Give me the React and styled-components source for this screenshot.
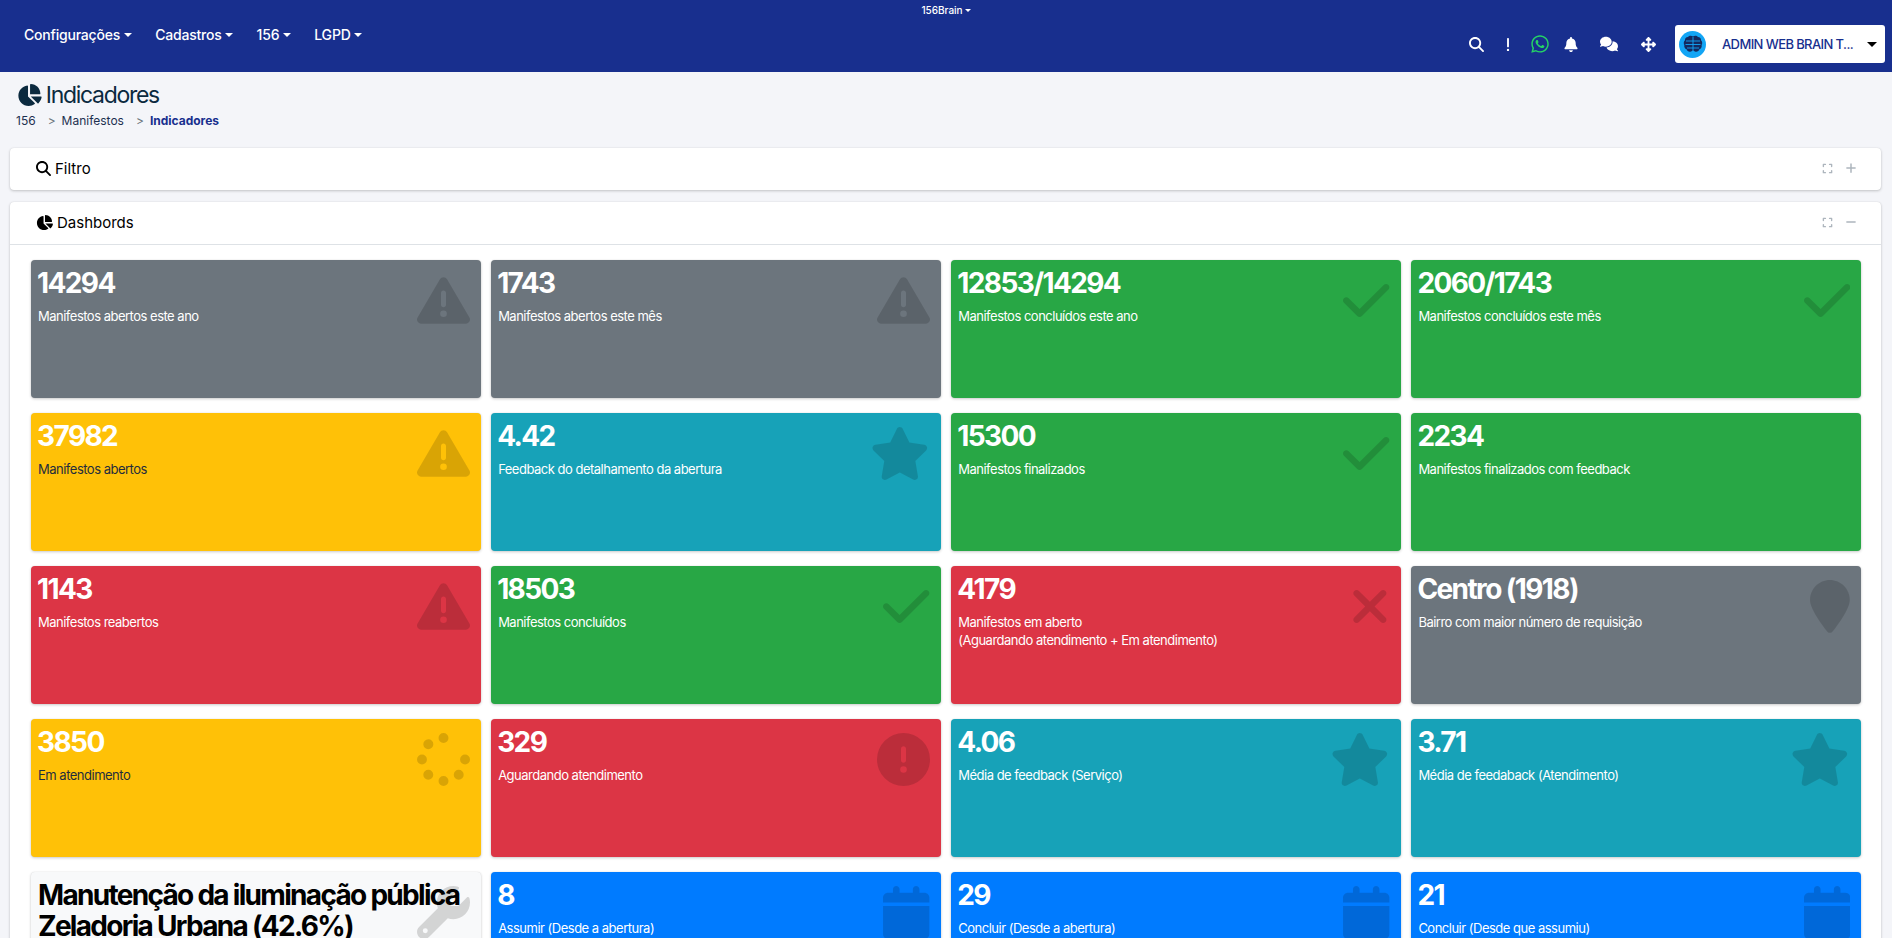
import React from 'react'
import styled, {createGlobalStyle} from 'styled-components'
import {
	FaChartPie, FaMagnifyingGlass, FaExclamation, FaWhatsapp, FaBell, FaComments,
	FaUpDownLeftRight, FaExpand, FaPlus, FaMinus, FaTriangleExclamation,
	FaCheck, FaStar, FaXmark, FaLocationPin, FaSpinner, FaCircleExclamation,
	FaWrench, FaCalendar,
} from 'react-icons/fa6'

const GlobalStyle = createGlobalStyle`
	html, body {
		margin: 0;
		height: 100%;
		overflow: hidden;
		background: #f4f5f9;
		font-family: Inter, "Liberation Sans", sans-serif;
	}
	* { box-sizing: border-box; }
`

const tones = {
	gray: {bg: '#6c757d', text: '#fff'},
	green: {bg: '#28a745', text: '#fff'},
	yellow: {bg: '#ffc107', text: '#1f2d3d'},
	info: {bg: '#17a2b8', text: '#fff'},
	red: {bg: '#dc3545', text: '#fff'},
	blue: {bg: '#007bff', text: '#fff'},
	light: {bg: '#f8f9fa', text: '#000'},
}

const Header = styled.header`
	height: 72px;
	background: #182f8e;
	color: #fff;
	padding: 3px 7px 0 24px;
`
const Brand = styled.div`
	height: 22px;
	margin: 0 -7px 0 -24px;
	font-size: 10px;
	line-height: 14px;
	font-weight: 500;
	text-align: center;
`
const Bar = styled.div`
	display: flex;
	justify-content: space-between;
	align-items: flex-start;
`
const Nav = styled.nav`
	display: flex;
	gap: 23.5px;
`
const NavItem = styled.a`
	font-size: 14px;
	line-height: 20px;
	font-weight: 500;
	letter-spacing: -0.2px;
	color: #fff;
`
const Caret = styled.span`
	display: inline-block;
	margin-left: ${props => props.$small ? 2 : 3.5}px;
	vertical-align: ${props => props.$small ? 2 : 3}px;
	border-top: ${props => props.$small ? 3 : props.$dark ? 5 : 4}px solid ${props => props.$dark ? '#000' : '#fff'};
	border-left: ${props => props.$small ? 3 : props.$dark ? 5 : 4}px solid transparent;
	border-right: ${props => props.$small ? 3 : props.$dark ? 5 : 4}px solid transparent;
`
const Tools = styled.div`
	display: flex;
	align-items: center;
	height: 38px;
`
const Tool = styled.span`
	display: flex;
	justify-content: center;
	width: ${props => props.$w}px;
	margin-right: ${props => props.$gap}px;
	font-size: ${props => props.$size || 15}px;
	color: ${props => props.$color || '#fff'};
`
const Profile = styled.div`
	width: 210px;
	height: 38px;
	background: #fff;
	border-radius: 3px;
	display: flex;
	align-items: center;
	padding: 0 8px 0 4px;
`
const Avatar = styled.span`
	width: 27px;
	height: 27px;
	border-radius: 50%;
	background: #12a5f5;
	display: flex;
	align-items: center;
	justify-content: center;
	flex: none;
`
const ProfileName = styled.span`
	flex: 1;
	margin-left: 16px;
	font-size: 13px;
	font-weight: 500;
	letter-spacing: -0.6px;
	color: #182f8e;
	white-space: nowrap;
`

const Main = styled.main`
	padding: 0 11px 0 10px;
`
const PageHead = styled.div`
	height: 76px;
	padding: 10px 0 0 7px;
`
const Title = styled.h1`
	margin: 0;
	display: flex;
	align-items: center;
	gap: 4px;
	font-size: 23px;
	line-height: 26px;
	font-weight: 400;
	letter-spacing: -1.3px;
	color: #0b2a3f;
	svg { height: 22px; width: 24.75px; }
`
const Crumbs = styled.div`
	display: flex;
	margin: 5px 0 0 -1px;
	font-size: 12px;
	line-height: 16px;
	color: #1d3050;
`
const Sep = styled.span`
	color: #6c757d;
	margin: 0 6px 0 12px;
`
const Current = styled.b`
	color: #182f8e;
	font-weight: 700;
`
const Panel = styled.section`
	background: #fff;
	border-radius: 4px;
	box-shadow: 0 0 1px rgba(0,0,0,.125), 0 1px 3px rgba(0,0,0,.2);
	margin-bottom: 12px;
`
const PanelHead = styled.div`
	height: ${props => props.$line ? 43 : 42}px;
	display: flex;
	align-items: center;
	padding: 0 24px 2px 26px;
	font-size: 15px;
	color: #000;
	border-bottom: ${props => props.$line ? '1px solid #dee2e6' : 'none'};
	svg { flex: none; }
`
const PanelTitle = styled.span`
	flex: 1;
	margin-left: 4px;
`
const PanelTool = styled.span`
	display: flex;
	font-size: ${props => props.$big ? 12 : 11}px;
	color: #adb5bd;
	margin-left: 12px;
`
const Grid = styled.div`
	display: grid;
	grid-template-columns: repeat(4, 1fr);
	gap: 15px 10.5px;
	padding: 15px 20px 30px 21px;
`
const Stat = styled.div`
	position: relative;
	height: 138px;
	border-radius: 4px;
	padding: 7px;
	background: ${props => tones[props.$tone].bg};
	color: ${props => tones[props.$tone].text};
	box-shadow: 0 0 1px rgba(0,0,0,.125), 0 1px 3px rgba(0,0,0,.2);
`
const Value = styled.div`
	position: relative;
	z-index: 1;
	margin-left: -1px;
	font-size: 28px;
	line-height: 33px;
	font-weight: 700;
	letter-spacing: -1.6px;
	white-space: pre;
	color: #fff;
`
const TitleValue = styled(Value)`
	margin: 1px 0 0;
	line-height: 31px;
	letter-spacing: -1.7px;
	color: #000;
`
const Caption = styled.div`
	position: relative;
	z-index: 1;
	margin-top: 7px;
	font-size: 13px;
	line-height: 18px;
	letter-spacing: -0.5px;
`
const StatIcon = styled.span`
	position: absolute;
	top: 14px;
	right: 11px;
	display: flex;
	color: rgba(0,0,0,.15);
	svg { height: 53px; width: ${props => props.$w}px; }
`

// width of each icon at 53px high, font-awesome keeps its own viewBox ratio
const stats = [
	{value: '14294', label: ['Manifestos abertos este ano'], tone: 'gray', Icon: FaTriangleExclamation, w: 53},
	{value: '1743', label: ['Manifestos abertos este mês'], tone: 'gray', Icon: FaTriangleExclamation, w: 53},
	{value: '12853/14294', label: ['Manifestos concluídos este ano'], tone: 'green', Icon: FaCheck, w: 46.4},
	{value: '2060/1743', label: ['Manifestos concluídos este mês'], tone: 'green', Icon: FaCheck, w: 46.4},
	{value: '37982', label: ['Manifestos abertos'], tone: 'yellow', Icon: FaTriangleExclamation, w: 53},
	{value: '4.42', label: ['Feedback do detalhamento da abertura'], tone: 'info', Icon: FaStar, w: 59.6},
	{value: '15300', label: ['Manifestos finalizados'], tone: 'green', Icon: FaCheck, w: 46.4},
	{value: '2234', label: ['Manifestos finalizados com feedback'], tone: 'green'},
	{value: '1143', label: ['Manifestos reabertos'], tone: 'red', Icon: FaTriangleExclamation, w: 53},
	{value: '18503', label: ['Manifestos concluídos'], tone: 'green', Icon: FaCheck, w: 46.4},
	{value: '4179', label: ['Manifestos em aberto', '(Aguardando atendimento + Em atendimento)'], tone: 'red', Icon: FaXmark, w: 39.75},
	{value: 'Centro (1918)', label: ['Bairro com maior número de requisição'], tone: 'gray', Icon: FaLocationPin, w: 39.75},
	{value: '3850', label: ['Em atendimento'], tone: 'yellow', Icon: FaSpinner, w: 53},
	{value: '329', label: ['Aguardando atendimento'], tone: 'red', Icon: FaCircleExclamation, w: 53},
	{value: '4.06', label: ['Média de feedback (Serviço)'], tone: 'info', Icon: FaStar, w: 59.6},
	{value: '3.71', label: ['Média de feedaback (Atendimento)'], tone: 'info', Icon: FaStar, w: 59.6},
	{value: 'Manutenção da iluminação pública\nZeladoria Urbana (42.6%)', label: [], tone: 'light', Icon: FaWrench, w: 53},
	{value: '8', label: ['Assumir (Desde a abertura)'], tone: 'blue', Icon: FaCalendar, w: 46.4},
	{value: '29', label: ['Concluir (Desde a abertura)'], tone: 'blue', Icon: FaCalendar, w: 46.4},
	{value: '21', label: ['Concluir (Desde que assumiu)'], tone: 'blue', Icon: FaCalendar, w: 46.4},
]

const BrainMark = () => (
	<svg width = "20" height = "18" viewBox = "0 0 20 18">
		<path d = "M10 1.5C8.6.3 6 .5 5 2 3 2 1.8 3.5 2 5.2.6 6.4.4 8.6 1.4 10c-.6 1.8.4 3.8 2.2 4.2.4 1.8 2.6 3 4.4 2.2.7-.2 1.4-.4 2-.8.6.4 1.3.6 2 .8 1.8.8 4-.4 4.4-2.2 1.8-.4 2.8-2.4 2.2-4.2 1-1.4.8-3.6-.6-4.8C18.200 3.500 17 2 15 2 14 .5 11.400.3 10 1.500Z" fill = "#13295f" />
		<path d = "M10 2v14M3 6h14M2.500 9.500h15M4 13h12" stroke = "#12a5f5" strokeWidth = ".9" fill = "none" />
	</svg>
)

const StatCard = ({value, label, tone, Icon, w}) => (
	<Stat $tone = {tone}>
		{tone === 'light' ? <TitleValue>{value}</TitleValue> : <Value>{value}</Value>}
		{label.length > 0 && (
			<Caption>
				{label.map((line) => <div key = {line}>{line}</div>)}
			</Caption>
		)}
		{Icon && <StatIcon $w = {w}><Icon /></StatIcon>}
	</Stat>
)

export default function App(){
	return(
		<>
			<GlobalStyle />
			<Header>
				<Brand>156Brain<Caret $small /></Brand>
				<Bar>
					<Nav>
						<NavItem>Configurações<Caret /></NavItem>
						<NavItem>Cadastros<Caret /></NavItem>
						<NavItem>156<Caret /></NavItem>
						<NavItem>LGPD<Caret /></NavItem>
					</Nav>
					<Tools>
						<Tool $w = {15} $gap = {20}><FaMagnifyingGlass /></Tool>
						<Tool $w = {8} $gap = {19}><FaExclamation /></Tool>
						<Tool $w = {18} $gap = {15} $size = {20} $color = '#25d366'><FaWhatsapp /></Tool>
						<Tool $w = {14} $gap = {21}><FaBell /></Tool>
						<Tool $w = {20} $gap = {22} $size = {18}><FaComments /></Tool>
						<Tool $w = {15} $gap = {19}><FaUpDownLeftRight /></Tool>
						<Profile>
							<Avatar><BrainMark /></Avatar>
							<ProfileName>ADMIN WEB BRAIN T...</ProfileName>
							<Caret $dark />
						</Profile>
					</Tools>
				</Bar>
			</Header>
			<Main>
				<PageHead>
					<Title><FaChartPie />Indicadores</Title>
					<Crumbs>
						156<Sep>&gt;</Sep>Manifestos<Sep>&gt;</Sep><Current>Indicadores</Current>
					</Crumbs>
				</PageHead>
				<Panel>
					<PanelHead>
						<FaMagnifyingGlass size = {15} />
						<PanelTitle>Filtro</PanelTitle>
						<PanelTool><FaExpand /></PanelTool>
						<PanelTool $big><FaPlus /></PanelTool>
					</PanelHead>
				</Panel>
				<Panel>
					<PanelHead $line>
						<FaChartPie size = {17} />
						<PanelTitle>Dashbords</PanelTitle>
						<PanelTool><FaExpand /></PanelTool>
						<PanelTool $big><FaMinus /></PanelTool>
					</PanelHead>
					<Grid>
						{stats.map((stat) => <StatCard key = {stat.value} {...stat} />)}
					</Grid>
				</Panel>
			</Main>
		</>
	)
}
